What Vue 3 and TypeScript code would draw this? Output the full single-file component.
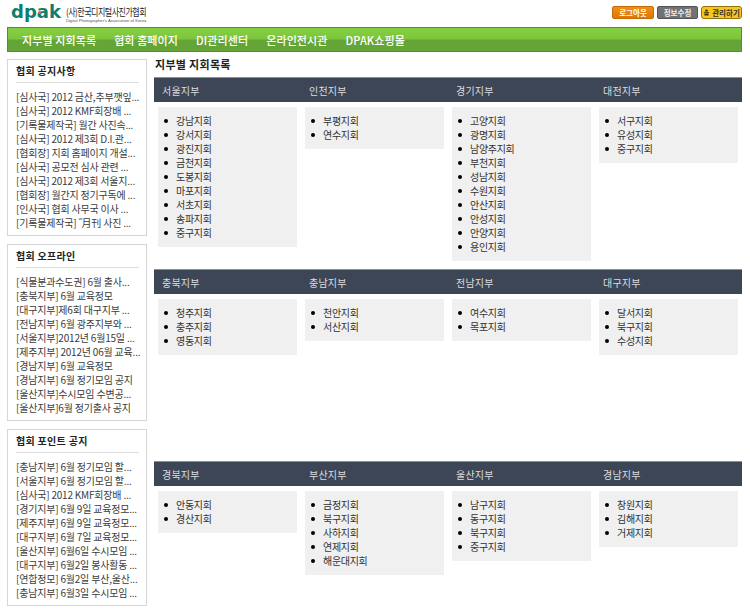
<script setup lang="ts">
interface Region {
  name: string
  branches: string[]
}

const navItems = ['지부별 지회목록', '협회 홈페이지', 'DI관리센터', '온라인전시관', 'DPAK쇼핑몰']

const sideBoxes = [
  {
    title: '협회 공지사항',
    items: [
      '[심사국] 2012 금산,추부깻잎...',
      '[심사국] 2012 KMF회장배 ...',
      '[기록물제작국] 월간 사진속...',
      '[심사국] 2012 제3회 D.I.관...',
      '[협회장] 지회 홈페이지 개설...',
      '[심사국] 공모전 심사 관련 ...',
      '[심사국] 2012 제3회 서울지...',
      '[협회장] 월간지 정기구독에 ...',
      '[인사국] 협회 사무국 이사 ...',
      '[기록물제작국] ˝月刊 사진 ...',
    ],
  },
  {
    title: '협회 오프라인',
    items: [
      '[식물분과수도권] 6월 출사...',
      '[충북지부] 6월 교육정모',
      '[대구지부]제6회 대구지부 ...',
      '[전남지부] 6월 광주지부와 ...',
      '[서울지부]2012년 6월15일 ...',
      '[제주지부] 2012년 06월 교육...',
      '[경남지부] 6월 교육정모',
      '[경남지부] 6월 정기모임 공지',
      '[울산지부]수시모임 수변공...',
      '[울산지부]6월 정기출사 공지',
    ],
  },
  {
    title: '협회 포인트 공지',
    items: [
      '[충남지부] 6월 정기모임 할...',
      '[서울지부] 6월 정기모임 할...',
      '[심사국] 2012 KMF회장배 ...',
      '[경기지부] 6월 9일 교육정모...',
      '[제주지부] 6월 9일 교육정모...',
      '[대구지부] 6월 7일 교육정모...',
      '[울산지부] 6월6일 수시모임 ...',
      '[대구지부] 6월2일 봉사활동 ...',
      '[연합정모] 6월2일 부산,울산...',
      '[충남지부] 6월3일 수시모임 ...',
    ],
  },
]

const regionRows: Region[][] = [
  [
    { name: '서울지부', branches: ['강남지회', '강서지회', '광진지회', '금천지회', '도봉지회', '마포지회', '서초지회', '송파지회', '중구지회'] },
    { name: '인천지부', branches: ['부평지회', '연수지회'] },
    { name: '경기지부', branches: ['고양지회', '광명지회', '남양주지회', '부천지회', '성남지회', '수원지회', '안산지회', '안성지회', '안양지회', '용인지회'] },
    { name: '대전지부', branches: ['서구지회', '유성지회', '중구지회'] },
  ],
  [
    { name: '충북지부', branches: ['청주지회', '충주지회', '영동지회'] },
    { name: '충남지부', branches: ['천안지회', '서산지회'] },
    { name: '전남지부', branches: ['여수지회', '목포지회'] },
    { name: '대구지부', branches: ['달서지회', '북구지회', '수성지회'] },
  ],
  [
    { name: '경북지부', branches: ['안동지회', '경산지회'] },
    { name: '부산지부', branches: ['금정지회', '북구지회', '사하지회', '연제지회', '해운대지회'] },
    { name: '울산지부', branches: ['남구지회', '동구지회', '북구지회', '중구지회'] },
    { name: '경남지부', branches: ['창원지회', '김해지회', '거제지회'] },
  ],
]
</script>

<template>
  <div class="page">
    <header class="top">
      <div class="logo">
        <span class="logo-mark">dpak<i class="logo-dot"></i></span>
        <div class="logo-text">
          <span class="logo-ko">(사)한국디지털사진가협회</span>
          <span class="logo-en">Digital Photographer's Association of Korea</span>
        </div>
      </div>
      <div class="top-buttons">
        <a class="btn btn-orange">로그아웃</a>
        <a class="btn btn-gray">정보수정</a>
        <a class="btn btn-yellow">
          <svg class="btn-icon" viewBox="0 0 8 8"><path d="M4 0.5a1.6 1.6 0 0 1 1.6 1.6v0.7H2.4V2.1A1.6 1.6 0 0 1 4 0.5zM0.8 3.6h6.4v1H0.8zM1.6 5.2h4.8v2.3H1.6z" fill="#3a3000" /></svg>
          관리하기
        </a>
      </div>
    </header>

    <nav class="nav">
      <a v-for="item in navItems" :key="item" class="nav-item">{{ item }}</a>
    </nav>

    <div class="body">
      <aside class="side">
        <section v-for="box in sideBoxes" :key="box.title" class="side-box">
          <h3 class="side-title">{{ box.title }}</h3>
          <ul class="side-list">
            <li v-for="(item, i) in box.items" :key="i">{{ item }}</li>
          </ul>
        </section>
      </aside>

      <main class="main">
        <h2 class="main-title">지부별 지회목록</h2>
        <section v-for="(row, r) in regionRows" :key="r" class="region-row">
          <div class="region-head">
            <span v-for="region in row" :key="region.name" class="region-name">{{ region.name }}</span>
          </div>
          <div class="region-cols">
            <div v-for="region in row" :key="region.name" class="region-col">
              <ul class="branch-list">
                <li v-for="branch in region.branches" :key="branch">{{ branch }}</li>
              </ul>
            </div>
          </div>
        </section>
      </main>
    </div>
  </div>
</template>

<style>
html,
body {
  background: #fff;
}
</style>

<style scoped>
.page {
  width: 750px;
  height: 611px;
  overflow: hidden;
  font-family: "Noto Sans CJK KR", "Liberation Sans", sans-serif;
  font-size: 10px;
  color: #333;
}

.top {
  height: 27px;
  display: flex;
  justify-content: space-between;
  padding: 0 8px 0 11px;
  box-sizing: border-box;
}

.logo {
  display: flex;
  align-items: flex-start;
  gap: 5px;
}

.logo-mark {
  position: relative;
  font-family: "DejaVu Sans", sans-serif;
  font-weight: 700;
  font-size: 18px;
  line-height: 24px;
  color: #0e7f6e;
}

.logo-dot {
  position: absolute;
  left: 27px;
  top: 11px;
  width: 3px;
  height: 3px;
  border-radius: 50%;
  background: #e2702a;
}

.logo-text {
  display: flex;
  flex-direction: column;
  padding-top: 6px;
  width: 82px;
}

.logo-ko {
  font-size: 10px;
  line-height: 12px;
  letter-spacing: -0.6px;
  white-space: nowrap;
  transform: scaleX(0.8);
  transform-origin: left center;
  color: #222;
}

.logo-en {
  font-family: "Liberation Sans", sans-serif;
  font-size: 4.2px;
  line-height: 6px;
  white-space: nowrap;
  color: #555;
}

.top-buttons {
  display: flex;
  gap: 3px;
  padding-top: 6px;
}

.btn {
  height: 13px;
  box-sizing: border-box;
  display: flex;
  align-items: center;
  justify-content: center;
  gap: 2px;
  border-radius: 2px;
  font-size: 7.5px;
  font-weight: 700;
  line-height: 1;
}

.btn-orange {
  width: 42px;
  background: linear-gradient(#ef8f14, #df7805);
  border: 1px solid #c56a05;
  color: #fff;
}

.btn-gray {
  width: 41px;
  background: #727272;
  border: 1px solid #555;
  color: #f0f0f0;
}

.btn-yellow {
  width: 41px;
  background: #fbc51c;
  border: 1px solid #8f7410;
  border-radius: 3px;
  color: #333;
}

.btn-icon {
  width: 7px;
  height: 7px;
}

.nav {
  margin: 0 8px 0 7px;
  height: 25px;
  box-sizing: border-box;
  border: 1px solid #3f9a2e;
  background: linear-gradient(#86cf42 0, #7cc63c 48%, #65a436 52%, #65a436 100%);
  display: flex;
  align-items: center;
  padding-left: 14px;
  gap: 18px;
}

.nav-item {
  color: #fff;
  font-size: 11px;
  font-weight: 500;
  letter-spacing: 0.1px;
}

.body {
  display: flex;
  margin-top: 7px;
  padding: 0 8px 0 7px;
  gap: 7px;
}

.side {
  width: 140px;
  flex: none;
  display: flex;
  flex-direction: column;
  gap: 8px;
}

.side-box {
  height: 177px;
  box-sizing: border-box;
  border: 1px solid #d6d6d6;
  padding: 4px 7px 0 8px;
}

.side-title {
  margin: 0;
  height: 18px;
  border-bottom: 1px solid #ddd;
  font-size: 10px;
  font-weight: 700;
  line-height: 14px;
  letter-spacing: 0.3px;
  color: #222;
}

.side-list {
  list-style: none;
  margin: 7px 0 0;
  padding: 0;
  font-size: 10px;
  line-height: 14px;
  letter-spacing: -0.2px;
  white-space: nowrap;
  color: #3c3c3c;
}

.main {
  flex: 1;
  min-width: 0;
}

.main-title {
  margin: 0;
  padding-left: 1px;
  height: 18px;
  font-size: 11px;
  font-weight: 700;
  line-height: 11px;
  letter-spacing: 0.3px;
  color: #222;
}

.region-row {
  height: 192px;
}

.region-head {
  height: 25px;
  box-sizing: border-box;
  border-top: 1px solid #8a8f99;
  background: #3d4657;
  display: grid;
  grid-template-columns: repeat(4, 147px);
  align-items: center;
  color: #ddd;
}

.region-name {
  padding-left: 8px;
  font-size: 10px;
  letter-spacing: 0.2px;
}

.region-cols {
  display: grid;
  grid-template-columns: repeat(4, 139px);
  gap: 8px;
  align-items: start;
  padding: 5px 4px 0;
}

.region-col {
  background: #f0f0f0;
}

.branch-list {
  margin: 0;
  padding: 7px 0 7px 18px;
  list-style: none;
  font-size: 10px;
  line-height: 14px;
  letter-spacing: -0.3px;
  color: #333;
}

.branch-list li {
  position: relative;
}

.branch-list li::before {
  content: "";
  position: absolute;
  left: -12px;
  top: 5px;
  width: 4px;
  height: 4px;
  border-radius: 50%;
  background: #000;
}
</style>
